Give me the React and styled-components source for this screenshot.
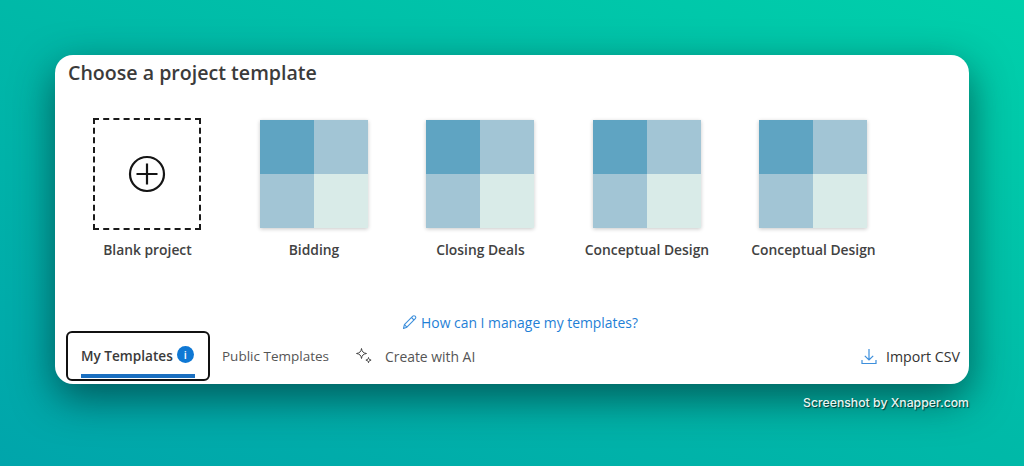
import React from "react";
import styled, { createGlobalStyle } from "styled-components";

const Global = createGlobalStyle`
  html, body { margin: 0; padding: 0; width: 100%; height: 100%; overflow: hidden; }
  #root { height: 100%; }
  * { box-sizing: border-box; }
`;

const Backdrop = styled.div`
  width: 1024px;
  height: 466px;
  position: relative;
  overflow: hidden;
  padding: 55px 55px 0;
  background: linear-gradient(to bottom left, #00d0ab 0%, #00b9a8 50%, #00a5ab 100%);
  font-family: "Open Sans", "Noto Sans", sans-serif;
`;

const Card = styled.div`
  width: 914px;
  height: 329px;
  background: #fff;
  border-radius: 18px;
  box-shadow: 0 14px 42px rgba(0, 35, 40, 0.62);
  display: flex;
  flex-direction: column;
  padding: 5px 9px 0 11px;
`;

const Title = styled.h1`
  margin: 0 0 0 2px;
  font-size: 19.6px;
  line-height: 26px;
  font-weight: 600;
  color: #3b3b3b;
`;

const Gallery = styled.div`
  display: flex;
  margin-top: 32px;
  margin-left: -1.8px;
  height: 194px;
`;

const Item = styled.div`
  width: 166.5px;
  display: flex;
  flex-direction: column;
  align-items: center;
`;

const Thumb = styled.div`
  width: 108px;
  height: 108px;
  display: grid;
  grid-template: 1fr 1fr / 1fr 1fr;
  margin-top: 2px;
  box-shadow: 0 1px 4px rgba(0, 0, 0, 0.22);
`;

const Cell = styled.div`
  background: ${(p) => p.$c};
`;

const Blank = styled.div`
  width: 108px;
  height: 112px;
  border: 2px dashed #1a1a1a;
  display: flex;
  align-items: center;
  justify-content: center;
`;

const Label = styled.div`
  margin-top: ${(p) => (p.$blank ? "11px" : "13px")};
  font-size: 13.85px;
  line-height: 18px;
  font-weight: 600;
  color: #424242;
  white-space: nowrap;
`;

const HelpRow = styled.div`
  display: flex;
  justify-content: center;
  align-items: center;
  gap: 4px;
  margin-left: 14px;
  height: 20px;
  color: #1f7fd6;
  font-size: 13.9px;
`;

const TabBar = styled.div`
  display: flex;
  align-items: center;
  margin-top: -1px;
  height: 50px;
`;

const ActiveTab = styled.div`
  position: relative;
  width: 144px;
  height: 50px;
  border: 2px solid #111;
  border-radius: 6px;
  display: flex;
  align-items: center;
  gap: 4px;
  padding: 0 0 1px 13px;
  font-size: 13.6px;
  font-weight: 600;
  color: #3a3a3a;
`;

const Underline = styled.span`
  position: absolute;
  left: 13px;
  right: 13px;
  bottom: 1px;
  height: 4px;
  background: #1a6fc0;
`;

const Badge = styled.span`
  width: 17px;
  height: 17px;
  border-radius: 50%;
  background: #0f78d4;
  color: #fff;
  font-size: 11px;
  font-weight: 600;
  display: flex;
  align-items: center;
  justify-content: center;
  margin-top: -3px;
`;

const Tab = styled.div`
  display: flex;
  align-items: center;
  gap: 12px;
  margin-left: ${(p) => p.$ml}px;
  font-size: ${(p) => p.$size}px;
  color: #555;
`;

const ImportBtn = styled.div`
  margin-left: auto;
  display: flex;
  align-items: center;
  gap: 9px;
  font-size: 14.2px;
  color: #333;
`;

const Credit = styled.div`
  position: absolute;
  right: 55px;
  top: 395px;
  font-family: "Inter", sans-serif;
  font-size: 12.25px;
  font-weight: 500;
  line-height: 16px;
  color: #e8f5f2;
  text-shadow: 1px 1px 1px rgba(0, 0, 0, 0.65);
`;

const colors = ["#5fa4c2", "#a2c5d5", "#a2c5d5", "#d9ebe8"];
const names = ["Bidding", "Closing Deals", "Conceptual Design", "Conceptual Design"];

export default function App() {
  return (
    <Backdrop>
      <Global />
      <Card>
        <Title>Choose a project template</Title>
        <Gallery>
          <Item>
            <Blank>
              <svg width="38" height="38" viewBox="0 0 38 38" fill="none" stroke="#151515" strokeWidth="2.2">
                <circle cx="19" cy="19" r="17" />
                <path d="M19 8.5v21M8.5 19h21" />
              </svg>
            </Blank>
            <Label $blank>Blank project</Label>
          </Item>
          {names.map((n, i) => (
            <Item key={i}>
              <Thumb>
                {colors.map((c, j) => (
                  <Cell key={j} $c={c} />
                ))}
              </Thumb>
              <Label>{n}</Label>
            </Item>
          ))}
        </Gallery>
        <HelpRow>
          <svg width="15" height="16" viewBox="0 0 15 16" fill="none" stroke="#3d8fdc" strokeWidth="1.1" strokeLinejoin="round">
            <path d="M1.5 14.5l.9-3.8L10.8 2.2a1.6 1.6 0 0 1 2.3 0l.2.2a1.6 1.6 0 0 1 0 2.3L4.9 13.2z" />
            <path d="M9.5 3.5l2.6 2.6M2.4 10.7l2.5 2.5" />
          </svg>
          How can I manage my templates?
        </HelpRow>
        <TabBar>
          <ActiveTab>
            My Templates
            <Badge>i</Badge>
            <Underline />
          </ActiveTab>
          <Tab $ml={12} $size={13.5}>Public Templates</Tab>
          <Tab $ml={26} $size={13.9}>
            <svg width="18" height="18" viewBox="0 0 18 18" fill="none" stroke="#444" strokeWidth="1" strokeLinejoin="round">
              <path d="M6.5 1.5c.5 3.2 1.6 4.4 5 5-3.4.6-4.5 1.8-5 5-.5-3.2-1.6-4.4-5-5 3.4-.6 4.5-1.8 5-5z" />
              <path d="M13.5 10.5c.3 1.7.9 2.3 2.6 2.6-1.7.3-2.3.9-2.6 2.6-.3-1.7-.9-2.3-2.6-2.6 1.7-.3 2.3-.9 2.6-2.6z" />
            </svg>
            Create with AI
          </Tab>
          <ImportBtn>
            <svg width="16" height="17" viewBox="0 0 16 17" fill="none" stroke="#3d8fdc" strokeWidth="1.2">
              <path d="M8 1v11M3.8 7.8L8 12l4.2-4.2M1 12v3.5h14V12" />
            </svg>
            Import CSV
          </ImportBtn>
        </TabBar>
      </Card>
      <Credit>Screenshot by Xnapper.com</Credit>
    </Backdrop>
  );
}
